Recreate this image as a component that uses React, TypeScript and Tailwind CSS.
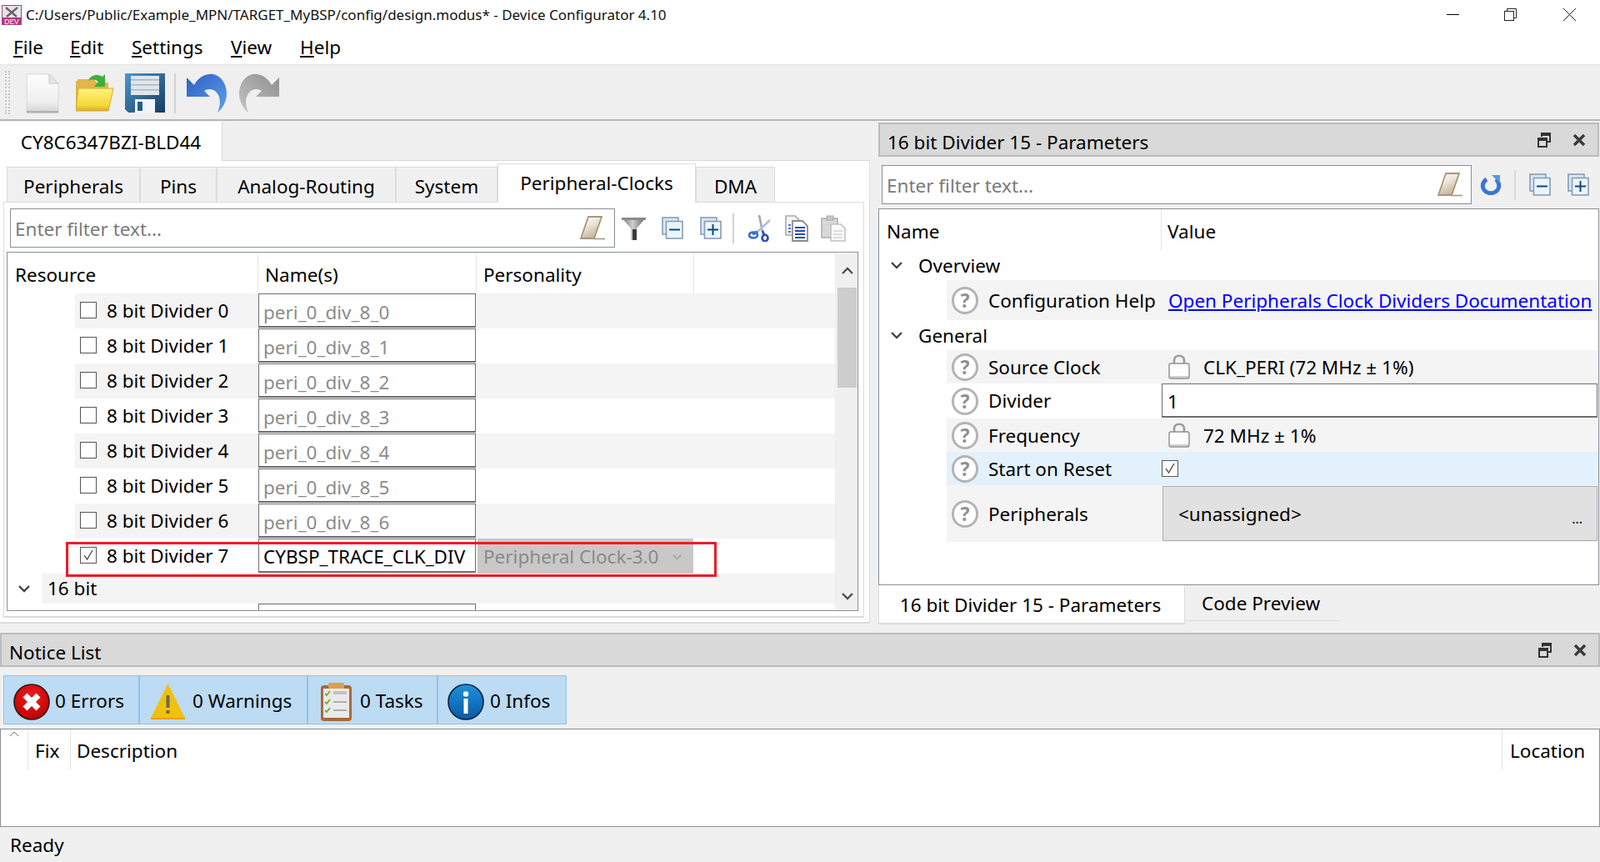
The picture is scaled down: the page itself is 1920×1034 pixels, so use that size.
import React from "react";

const DocIcon = () => (
  <svg width="40" height="48" viewBox="0 0 40 48">
    <defs>
      <linearGradient id="dg" x1="0" y1="0" x2="0" y2="1">
        <stop offset="0" stopColor="#fdfdfd" />
        <stop offset="0.7" stopColor="#f0f0f0" />
        <stop offset="1" stopColor="#d4d4d4" />
      </linearGradient>
    </defs>
    <path d="M1 1H28L39 12V47H1Z" fill="url(#dg)" stroke="#d6d6d6" />
    <path d="M28 1V12H39Z" fill="#e4e4e4" stroke="#c8c8c8" />
    <rect x="1" y="45" width="38" height="2.5" fill="#b0b0b0" />
  </svg>
);

const FolderIcon = () => (
  <svg width="46" height="46" viewBox="0 0 46 46">
    <defs>
      <linearGradient id="fg" x1="0" y1="0" x2="0" y2="1">
        <stop offset="0" stopColor="#fff27a" />
        <stop offset="0.75" stopColor="#f5d83a" />
        <stop offset="1" stopColor="#d9a92a" />
      </linearGradient>
    </defs>
    <path d="M0 10L3 7H22L25 11H39V40H0Z" fill="#e2b64b" />
    <path d="M15 9C17 2 26 0 32 4L35 1V16H22L27 10C23 7 19 7 15 9Z" fill="#3fae3a" />
    <path d="M3 18H45L39 45H0Z" fill="url(#fg)" stroke="#d7a93a" />
  </svg>
);

const SaveIcon = () => (
  <svg width="48" height="47" viewBox="0 0 48 47">
    <defs>
      <linearGradient id="sg" x1="0" y1="0" x2="1" y2="1">
        <stop offset="0" stopColor="#4f97cf" />
        <stop offset="1" stopColor="#123c60" />
      </linearGradient>
    </defs>
    <path d="M0 0H48V47H4L0 43Z" fill="url(#sg)" />
    <rect x="7" y="3" width="34" height="23" fill="#dfe6ea" />
    <rect x="7" y="7" width="34" height="1.5" fill="#a8b6c0" />
    <rect x="7" y="13" width="34" height="1.5" fill="#a8b6c0" />
    <rect x="7" y="19" width="34" height="1.5" fill="#a8b6c0" />
    <rect x="12" y="31" width="24" height="16" fill="#f2f4f7" />
    <rect x="15" y="34" width="6" height="11" fill="#1d5f93" />
  </svg>
);

const ArcIcon = ({ gray, id }: { gray?: boolean; id: string }) => (
  <svg width="48" height="47" viewBox="0 0 48 47" className={gray ? "-scale-x-100" : ""}>
    <defs>
      <linearGradient id={id} x1="0" y1="0" x2="1" y2="1">
        <stop offset="0" stopColor={gray ? "#8f8f8f" : "#2c5fc4"} />
        <stop offset="1" stopColor={gray ? "#c4c4c4" : "#5f9fea"} />
      </linearGradient>
    </defs>
    <path
      d="M0 5L9 14C15 3 25 0 32 1C42 3 48 14 48 24C48 34 43 42 37 47C41 38 41 29 36 23C32 18 25 18 21 21L28 28H0Z"
      fill={`url(#${id})`}
    />
  </svg>
);

const EraserIcon = ({ id }: { id: string }) => (
  <svg width="30" height="29" viewBox="0 0 30 29">
    <defs>
      <linearGradient id={id} x1="0" y1="0" x2="0.5" y2="1">
        <stop offset="0" stopColor="#fbf9f5" />
        <stop offset="0.45" stopColor="#efe7dc" />
        <stop offset="1" stopColor="#c6b298" />
      </linearGradient>
    </defs>
    <path d="M10 1H26L17 27H1Z" fill={`url(#${id})`} stroke="#a8977c" strokeWidth="1.8" />
    <path d="M16 27.5H30" stroke="#a8977c" strokeWidth="1.6" />
  </svg>
);

const FunnelIcon = () => (
  <svg width="29" height="28" viewBox="0 0 29 28">
    <defs>
      <linearGradient id="fn" x1="0" y1="0" x2="1" y2="0">
        <stop offset="0" stopColor="#6f6f6f" />
        <stop offset="0.45" stopColor="#cfcfcf" />
        <stop offset="1" stopColor="#5e5e5e" />
      </linearGradient>
    </defs>
    <path d="M0 1H29L18 14V26L11 28V14Z" fill="url(#fn)" />
    <rect x="0" y="1" width="29" height="3" fill="#8a8a8a" />
    <rect x="13" y="15" width="5" height="13" fill="#3a3a3a" />
  </svg>
);

const StackIcon = ({ plus, w = 26 }: { plus?: boolean; w?: number }) => (
  <svg width={w} height="27" viewBox="0 0 26 27" preserveAspectRatio="none">
    <rect x="1" y="1" width="19" height="20" fill="#d5e7f6" stroke="#8a9db4" strokeWidth="1.6" />
    <rect x="5.5" y="5.5" width="19.5" height="20.5" fill="#eaf5fd" stroke="#8a9db4" strokeWidth="1.6" />
    <rect x="9" y="14.5" width="13" height="2" fill="#0d4a7a" />
    {plus && <rect x="14.5" y="9" width="2" height="13" fill="#0d4a7a" />}
  </svg>
);

const ScissorsIcon = () => (
  <svg width="27" height="32" viewBox="0 0 27 32">
    <path d="M13 0L17 20" stroke="#a6a8ac" strokeWidth="2.6" />
    <path d="M26 6L10 21" stroke="#a9c3e0" strokeWidth="2.6" />
    <path d="M17 19L19 24" stroke="#2a52b8" strokeWidth="3" />
    <path d="M11 20L5 23" stroke="#3b6ed0" strokeWidth="3.4" />
    <ellipse cx="6" cy="24" rx="5" ry="3.4" fill="none" stroke="#3b6ed0" strokeWidth="2.8" />
    <ellipse cx="20" cy="27.5" rx="3.4" ry="3.8" fill="none" stroke="#2a52b8" strokeWidth="2.8" />
  </svg>
);

const CopyIcon = () => (
  <svg width="28" height="32" viewBox="0 0 28 32">
    <path d="M1 1H12L17 6V24H1Z" fill="#f2f4f8" stroke="#a9a9a9" strokeWidth="1.6" />
    <path d="M9 7H21L27 13V31H9Z" fill="#fff" stroke="#8d8d8d" strokeWidth="1.8" />
    <path d="M12 15H24M12 19H24M12 23H24M12 27H24" stroke="#234eb0" strokeWidth="1.8" />
    <path d="M4 12H7M4 16H7M4 20H7" stroke="#234eb0" strokeWidth="1.4" />
  </svg>
);

const PasteIcon = () => (
  <svg width="30" height="32" viewBox="0 0 30 32">
    <rect x="1" y="4" width="19" height="23" fill="#d8d8d8" stroke="#b0b0b0" strokeWidth="1.6" />
    <rect x="7" y="1" width="8" height="5" fill="#c8c8c8" stroke="#a8a8a8" />
    <path d="M12 11H24L29 16V31H12Z" fill="#fafafa" stroke="#c2c2c2" strokeWidth="1.6" />
    <path d="M15 19H26M15 23H26M15 27H26" stroke="#d4d4d4" strokeWidth="1.5" />
  </svg>
);

const RefreshIcon = () => (
  <svg width="26" height="24" viewBox="0 0 26 24">
    <path d="M8 5C3 8 2 14 5 18C9 23 17 23 21 18C24 14 23 8 19 5" fill="none" stroke="#3a75d4" strokeWidth="5" />
    <path d="M14 0H24V10Z" fill="#5b95e6" />
  </svg>
);

const LockIcon = () => (
  <svg width="26" height="30" viewBox="0 0 26 30">
    <path d="M7 13V7C7 0 19 0 19 7V13" fill="none" stroke="#9c9c9c" strokeWidth="2.6" />
    <rect x="1" y="11" width="24" height="18" rx="2" fill="#fdfdfd" stroke="#8e8e8e" strokeWidth="1.4" />
    <rect x="2" y="26" width="22" height="2" fill="#cfcfcf" />
  </svg>
);

const FloatIcon = () => (
  <svg width="16" height="18" viewBox="0 0 16 18">
    <path d="M5 5V1H15V11H11" fill="none" stroke="#333" strokeWidth="2" />
    <rect x="5" y="1" width="10" height="3" fill="#333" />
    <rect x="1" y="7" width="10" height="10" fill="none" stroke="#333" strokeWidth="2" />
    <rect x="1" y="7" width="10" height="3" fill="#333" />
  </svg>
);

const CloseX = () => (
  <svg width="16" height="16" viewBox="0 0 16 16">
    <path d="M2 2L14 14M14 2L2 14" stroke="#3a3a3a" strokeWidth="3.4" />
  </svg>
);

const ErrorIcon = () => (
  <svg width="44" height="44" viewBox="0 0 44 44">
    <defs>
      <radialGradient id="eg" cx="0.5" cy="0.35" r="0.7">
        <stop offset="0" stopColor="#f21c1c" />
        <stop offset="1" stopColor="#bb0000" />
      </radialGradient>
    </defs>
    <circle cx="22" cy="22" r="21" fill="url(#eg)" stroke="#2a1a1a" strokeWidth="1.6" />
    <path d="M14 14L30 30M30 14L14 30" stroke="#fff" strokeWidth="7" />
  </svg>
);

const WarnIcon = () => (
  <svg width="41" height="43" viewBox="0 0 41 43">
    <path d="M20.5 0L41 41V43H0V41Z" fill="#f0c20e" />
    <rect x="0" y="41" width="41" height="2" fill="#ee9c10" />
    <rect x="18.5" y="14" width="4" height="15" fill="#6b6b55" />
    <rect x="18.5" y="32" width="4" height="4" fill="#6b6b55" />
  </svg>
);

const TaskIcon = () => (
  <svg width="39" height="48" viewBox="0 0 39 48">
    <rect x="1" y="4" width="37" height="43" rx="4" fill="#a9683a" />
    <rect x="4" y="8" width="31" height="35" fill="#e9eaea" />
    <rect x="10" y="1" width="19" height="7" rx="1.5" fill="#dd9f4e" />
    <path d="M16 13H32" stroke="#c2c2c2" strokeWidth="4" />
    <path d="M16 24H32M16 34H32" stroke="#9a9a9a" strokeWidth="1.6" />
    <path d="M6 14L8 16L12 11M6 24L8 26L12 21M6 34L8 36L12 31" fill="none" stroke="#7ab12d" strokeWidth="2" />
  </svg>
);

const InfoIcon = () => (
  <svg width="44" height="44" viewBox="0 0 44 44">
    <defs>
      <linearGradient id="ig" x1="0" y1="0" x2="0" y2="1">
        <stop offset="0" stopColor="#1e90da" />
        <stop offset="1" stopColor="#0a5aa6" />
      </linearGradient>
    </defs>
    <circle cx="22" cy="22" r="21" fill="url(#ig)" stroke="#0b2340" strokeWidth="1.6" />
    <circle cx="22" cy="12.5" r="3.2" fill="#fff" />
    <rect x="19.5" y="18" width="5" height="18" fill="#fff" />
  </svg>
);

const AppIcon = () => (
  <svg width="24" height="24" viewBox="0 0 24 24">
    <rect x="0.5" y="0.5" width="23" height="23" fill="#e9e4e8" stroke="#b13a7d" />
    <path d="M5 3L18 14M19 3L6 14" stroke="#666" strokeWidth="2.4" />
    <rect x="0" y="15" width="24" height="9" fill="#b13a7d" />
    <text x="12" y="23" textAnchor="middle" fontSize="8.5" fill="#fff" fontFamily="Liberation Sans, sans-serif">DEV</text>
  </svg>
);

const Chevron = ({ up, color = "#444", w = 14 }: { up?: boolean; color?: string; w?: number }) => (
  <svg width={w} height="9" viewBox="0 0 14 9">
    <path d={up ? "M1 8L7 2L13 8" : "M1 1L7 7L13 1"} fill="none" stroke={color} strokeWidth="2.4" />
  </svg>
);

const Help = () => (
  <div className="flex h-[33px] w-[32px] shrink-0 items-center justify-center rounded-full border-[3px] border-[#b4b4b4] bg-white text-[23px] font-bold leading-none text-[#8f8f8f]">?</div>
);

const Check = ({ checked }: { checked?: boolean }) => (
  <div className="flex h-[20px] w-[20px] shrink-0 items-center justify-center border border-[#555] bg-white">
    {checked && (
      <svg width="14" height="14" viewBox="0 0 14 14">
        <path d="M2 7L5.5 12L12 1" fill="none" stroke="#444" strokeWidth="1.3" />
      </svg>
    )}
  </div>
);

const TitleBar = ({ title }: { title: string }) => (
  <div className="flex h-[41px] items-center justify-between border-2 border-[#bcbcbc] bg-[#d9d9d9]">
    <span className="pl-[9px] pt-[7px] text-black">{title}</span>
    <div className="flex items-center gap-[26px] pr-[14px]">
      <FloatIcon />
      <CloseX />
    </div>
  </div>
);

const Tab = ({ label, w, active }: { label: string; w: number; active?: boolean }) => (
  <div
    style={{ width: w }}
    className={
      active
        ? "relative z-10 -mb-px flex h-[47px] items-start justify-center border border-b-0 border-[#dcdcdc] bg-white pt-[12px]"
        : "flex h-[42px] items-center justify-center border border-b-0 border-[#dcdcdc] bg-[#f0f0f0] pt-[5px]"
    }
  >
    {label}
  </div>
);

const rows = [0, 1, 2, 3, 4, 5, 6];

const ResourceRow = ({ i }: { i: number }) => (
  <div className="flex h-[42px] shrink-0">
    <div className="w-[81px] shrink-0 bg-white" />
    <div className={`flex flex-1 ${i % 2 === 0 ? "bg-[#f4f4f4]" : "bg-white"}`}>
      <div className="flex w-[220px] shrink-0 items-center pb-[2px] pl-[6px]">
        <Check />
        <span className="ml-[12px] mt-[2px]">8 bit Divider {i}</span>
      </div>
      <div className="h-[41px] w-[261px] shrink-0 border border-b-2 border-[#6e6e6e] bg-white pl-[5px] pt-[5px] leading-[34px] text-[#8c8c8c]">
        peri_0_div_8_{i}
      </div>
    </div>
  </div>
);

export default function App() {
  return (
    <div className="relative flex h-[1034px] w-[1920px] flex-col overflow-hidden bg-[#f0f0f0] font-['Open_Sans','Noto_Sans',sans-serif] text-[22.5px] leading-none text-black">
      {/* Title + menu */}
      <div className="h-[77px] shrink-0 bg-white">
        <div className="flex h-[37px] items-center pl-[2px]">
          <div className="mb-[2px]"><AppIcon /></div>
          <span className="ml-[5px] pb-[2px] text-[17px] text-[#111]">C:/Users/Public/Example_MPN/TARGET_MyBSP/config/design.modus* - Device Configurator 4.10</span>
          <div className="ml-auto flex items-center pb-[2px] pr-[29px]">
            <div className="h-px w-[15px] bg-black" />
            <svg width="15" height="15" viewBox="0 0 15 15" className="ml-[54px]">
              <rect x="0.5" y="3.5" width="11" height="11" fill="#fff" stroke="#222" />
              <path d="M3.5 3V0.5H14.5V11.5H12" fill="none" stroke="#222" />
            </svg>
            <svg width="15" height="15" viewBox="0 0 15 15" className="ml-[56px]">
              <path d="M0 0L15 15M15 0L0 15" stroke="#222" />
            </svg>
          </div>
        </div>
        <div className="flex h-[39px] items-center pl-[16px] pt-[2px]">
          <div className="w-[68px]"><u>F</u>ile</div>
          <div className="w-[74px]"><u>E</u>dit</div>
          <div className="w-[119px]"><u>S</u>ettings</div>
          <div className="w-[83px]"><u>V</u>iew</div>
          <div><u>H</u>elp</div>
        </div>
      </div>

      {/* Toolbar */}
      <div className="flex h-[68px] shrink-0 items-start border-b-[2px] border-t border-[#e4e4e4] border-b-[#b8b8b8] bg-[#efefef] pl-[6px] pt-[10px]">
        <div className="mt-[-3px] h-[52px] w-[6px] border-x-2 border-dotted border-[#c8c8c8]" />
        <div className="ml-[19px]"><DocIcon /></div>
        <div className="ml-[20px]"><FolderIcon /></div>
        <div className="ml-[13px]"><SaveIcon /></div>
        <div className="ml-[11px] h-[48px] w-[2px] bg-[#d2d2d2]" />
        <div className="ml-[13px]"><ArcIcon id="un" /></div>
        <div className="ml-[15px]"><ArcIcon id="re" gray /></div>
      </div>

      {/* Main */}
      <div className="flex h-[603px] shrink-0 pt-px">
        {/* Left */}
        <div className="flex h-[602px] w-[1044px] shrink-0 flex-col">
          <div className="flex h-[47px] shrink-0">
            <div className="flex w-[267px] items-center justify-center border-r border-[#d8d8d8] bg-white pt-[4px]">CY8C6347BZI-BLD44</div>
            <div className="flex-1 border-b border-[#d8d8d8]" />
          </div>
          <div className="flex flex-1 flex-col border-b-2 border-r border-[#dcdcdc] bg-white">
            {/* Inner tabs */}
            <div className="mt-[3px] flex h-[46px] items-end pl-[8px]">
              <Tab label="Peripherals" w={160} />
              <Tab label="Pins" w={92} />
              <Tab label="Analog-Routing" w={215} />
              <Tab label="System" w={122} />
              <Tab label="Peripheral-Clocks" w={238} active />
              <Tab label="DMA" w={95} />
            </div>
            <div className="ml-[4px] flex h-[499px] w-[1033px] flex-col border-x border-b-2 border-t border-[#dcdcdc] pl-[3px]">
              {/* Filter */}
              <div className="mt-[7px] flex h-[47px] shrink-0 items-center pl-[4px]">
                <div className="flex h-[47px] w-[726px] items-center justify-between border border-[#8a8f96] pl-[5px] pr-[11px] text-[#7b7b7b]">
                  <span className="pt-[3px]">Enter filter text...</span>
                  <EraserIcon id="e1" />
                </div>
                <div className="ml-[8px]"><FunnelIcon /></div>
                <div className="ml-[19px]"><StackIcon /></div>
                <div className="ml-[20px]"><StackIcon plus /></div>
                <div className="ml-[13px] h-[36px] w-[2px] bg-[#d2d2d2]" />
                <div className="ml-[17px]"><ScissorsIcon /></div>
                <div className="ml-[17px]"><CopyIcon /></div>
                <div className="ml-[15px]"><PasteIcon /></div>
              </div>
              {/* Tree */}
              <div className="mt-[5px] flex h-[431px] w-[1022px] shrink-0 border border-[#8a8f96]">
                <div className="flex w-[993px] shrink-0 flex-col overflow-hidden">
                  <div className="flex h-[49px] shrink-0 items-center">
                    <div className="h-full w-[301px] shrink-0 border-r border-[#e4e4e4] pl-[9px] pt-[16px]">Resource</div>
                    <div className="h-full w-[262px] shrink-0 border-r border-[#e4e4e4] pl-[8px] pt-[16px]">Name(s)</div>
                    <div className="h-full w-[261px] shrink-0 border-r border-[#e4e4e4] pl-[8px] pt-[16px]">Personality</div>
                  </div>
                  {rows.map((i) => (
                    <ResourceRow key={i} i={i} />
                  ))}
                  <div className="flex h-[42px] shrink-0">
                    <div className="w-[81px] shrink-0" />
                    <div className="flex w-[220px] shrink-0 items-center pb-[2px] pl-[6px]">
                      <Check checked />
                      <span className="ml-[12px] mt-[2px]">8 bit Divider 7</span>
                    </div>
                    <div className="h-[41px] w-[261px] shrink-0 border border-b-2 border-[#6e6e6e] bg-white pl-[5px] pt-[4px] leading-[34px]">CYBSP_TRACE_CLK_DIV</div>
                    <div className="ml-[2px] flex h-[42px] w-[259px] shrink-0 items-center justify-between bg-[#c8c8c8] pl-[7px] pr-[14px] pt-[2px] text-[#8a8a8a]">
                      <span>Peripheral Clock-3.0</span>
                      <Chevron color="#a8a8a8" w={11} />
                    </div>
                  </div>
                  <div className="flex h-[36px] shrink-0 items-center">
                    <div className="flex w-[41px] shrink-0 justify-center pr-[2px]"><Chevron /></div>
                    <div className="flex h-full flex-1 items-center bg-[#f4f4f4] pl-[7px]">16 bit</div>
                  </div>
                  <div className="flex flex-1">
                    <div className="w-[301px] shrink-0" />
                    <div className="h-[20px] w-[261px] border-x border-t border-[#6e6e6e]" />
                  </div>
                </div>
                {/* Scrollbar */}
                <div className="mt-[1px] flex w-[27px] shrink-0 flex-col border-l border-[#eee] bg-[#f0f0f0] pl-[1px]">
                  <div className="flex h-[41px] shrink-0 items-center justify-center"><Chevron up color="#505050" /></div>
                  <div className="mx-[1px] h-[120px] shrink-0 bg-[#cdcdcd]" />
                  <div className="mb-[5px] mt-auto flex h-[24px] items-center justify-center"><Chevron color="#505050" /></div>
                </div>
              </div>
            </div>
          </div>
        </div>

        {/* Right */}
        <div className="ml-[10px] flex h-[602px] w-[865px] shrink-0 flex-col">
          <div className="mt-px"><TitleBar title="16 bit Divider 15 - Parameters" /></div>
          <div className="ml-[4px] mt-[10px] flex h-[47px] shrink-0 items-center">
            <div className="flex h-[47px] w-[708px] items-center justify-between border border-[#8a8f96] bg-white pl-[5px] pr-[10px] text-[#7b7b7b]">
              <span className="pt-[4px]">Enter filter text...</span>
              <EraserIcon id="e2" />
            </div>
            <div className="ml-[10px]"><RefreshIcon /></div>
            <div className="ml-[15px] h-[36px] w-[2px] bg-[#d8d8d8]" />
            <div className="ml-[16px]"><StackIcon w={26} /></div>
            <div className="ml-[20px]"><StackIcon plus w={26} /></div>
          </div>
          <div className="mt-[5px] flex h-[452px] shrink-0 flex-col border border-[#8a8f96] bg-white">
            <div className="flex h-[49px] shrink-0">
              <div className="h-full w-[339px] shrink-0 border-r border-[#e4e4e4] pl-[9px] pt-[16px]">Name</div>
              <div className="pl-[7px] pt-[16px]">Value</div>
            </div>
            <div className="flex h-[36px] shrink-0 items-center pl-[14px]">
              <Chevron />
              <span className="ml-[19px] mt-[2px]">Overview</span>
            </div>
            <div className="ml-[81px] flex h-[48px] shrink-0 items-center bg-[#f4f4f4] pl-[6px]">
              <Help />
              <span className="ml-[12px] mt-[2px] w-[216px] shrink-0 whitespace-nowrap">Configuration Help</span>
              <a href="#" className="mt-[2px] whitespace-nowrap text-[#0000ff] underline">Open Peripherals Clock Dividers Documentation</a>
            </div>
            <div className="flex h-[36px] shrink-0 items-center pl-[14px]">
              <Chevron />
              <span className="ml-[19px] mt-[2px]">General</span>
            </div>
            <div className="ml-[81px] flex h-[40px] shrink-0 items-center bg-[#f4f4f4] pl-[6px]">
              <Help />
              <span className="ml-[12px] mt-[2px] w-[216px] shrink-0">Source Clock</span>
              <LockIcon />
              <span className="ml-[16px] mt-[2px]">CLK_PERI (72 MHz ± 1%)</span>
            </div>
            <div className="ml-[81px] flex h-[42px] shrink-0 items-center pl-[6px]">
              <Help />
              <span className="ml-[12px] w-[208px] shrink-0">Divider</span>
              <div className="h-[41px] w-[523px] shrink-0 self-start border border-b-2 border-[#6e6e6e] pl-[6px] pt-[5px] leading-[32px]">1</div>
            </div>
            <div className="ml-[81px] flex h-[40px] shrink-0 items-center bg-[#f4f4f4] pl-[6px]">
              <Help />
              <span className="ml-[12px] mt-[2px] w-[216px] shrink-0">Frequency</span>
              <LockIcon />
              <span className="ml-[16px] mt-[2px]">72 MHz ± 1%</span>
            </div>
            <div className="ml-[81px] flex h-[40px] shrink-0 items-center bg-[#e3f1fc] pl-[6px]">
              <Help />
              <span className="ml-[12px] mt-[2px] w-[208px] shrink-0">Start on Reset</span>
              <Check checked />
            </div>
            <div className="ml-[81px] flex h-[68px] shrink-0 items-center bg-[#f4f4f4] pl-[6px]">
              <Help />
              <span className="ml-[12px] mt-[2px] w-[209px] shrink-0">Peripherals</span>
              <div className="flex h-[66px] w-[522px] shrink-0 items-center justify-between border border-[#adadad] bg-[#e1e1e1] pl-[18px] pr-[17px]">
                <span className="pt-[2px]">&lt;unassigned&gt;</span>
                <span className="pt-[12px] text-[16px]">...</span>
              </div>
            </div>
          </div>
          <div className="flex h-[47px] shrink-0 items-start">
            <div className="flex h-[47px] w-[368px] items-center justify-center border-x border-b-2 border-[#dcdcdc] bg-white pr-[3px] pt-[4px]">16 bit Divider 15 - Parameters</div>
            <div className="flex h-[43px] w-[185px] items-center border-b border-[#d8d8d8] pl-[20px] pt-[2px]">Code Preview</div>
          </div>
        </div>
      </div>

      {/* Notice List */}
      <div className="mt-[11px] shrink-0"><TitleBar title="Notice List" /></div>
      <div className="ml-[4px] mt-[10px] flex h-[59px] w-[676px] shrink-0 border border-[#8cc4f0] bg-[#bddbf3] pt-[3px]">
        <div className="-mt-[3px] flex w-[163px] items-center border-r-2 border-[#8cc4f0] pl-[11px] pt-[4px]">
          <ErrorIcon />
          <span className="ml-[6px]">0 Errors</span>
        </div>
        <div className="-mt-[3px] flex w-[202px] items-center border-r-2 border-[#8cc4f0] pl-[13px] pt-[4px]">
          <WarnIcon />
          <span className="ml-[9px]">0 Warnings</span>
        </div>
        <div className="-mt-[3px] flex w-[156px] items-center border-r-2 border-[#8cc4f0] pl-[14px] pt-[4px]">
          <TaskIcon />
          <span className="ml-[9px]">0 Tasks</span>
        </div>
        <div className="-mt-[3px] flex flex-1 items-center pl-[11px] pt-[4px]">
          <InfoIcon />
          <span className="ml-[7px]">0 Infos</span>
        </div>
      </div>
      <div className="mt-[5px] flex h-[118px] shrink-0 flex-col border border-[#8a8f96] bg-white">
        <div className="flex h-[48px] shrink-0">
          <div className="flex h-full w-[33px] shrink-0 justify-center border-r border-[#e4e4e4] pt-[2px]">
            <svg width="12" height="7" viewBox="0 0 12 7"><path d="M1 6L6 1L11 6" fill="none" stroke="#777" /></svg>
          </div>
          <div className="h-full w-[51px] shrink-0 border-r border-[#e4e4e4] pl-[8px] pt-[15px]">Fix</div>
          <div className="h-full flex-1 border-r border-[#e4e4e4] pl-[7px] pt-[15px]">Description</div>
          <div className="h-full w-[116px] shrink-0 pl-[9px] pt-[15px]">Location</div>
        </div>
      </div>
      <div className="flex flex-1 items-center pl-[12px] pt-[2px]">Ready</div>

      {/* Highlight annotation */}
      <div className="pointer-events-none absolute left-[79px] top-[650px] h-[42px] w-[781px] border-[3px] border-[#ed1c24]" />
    </div>
  );
}
